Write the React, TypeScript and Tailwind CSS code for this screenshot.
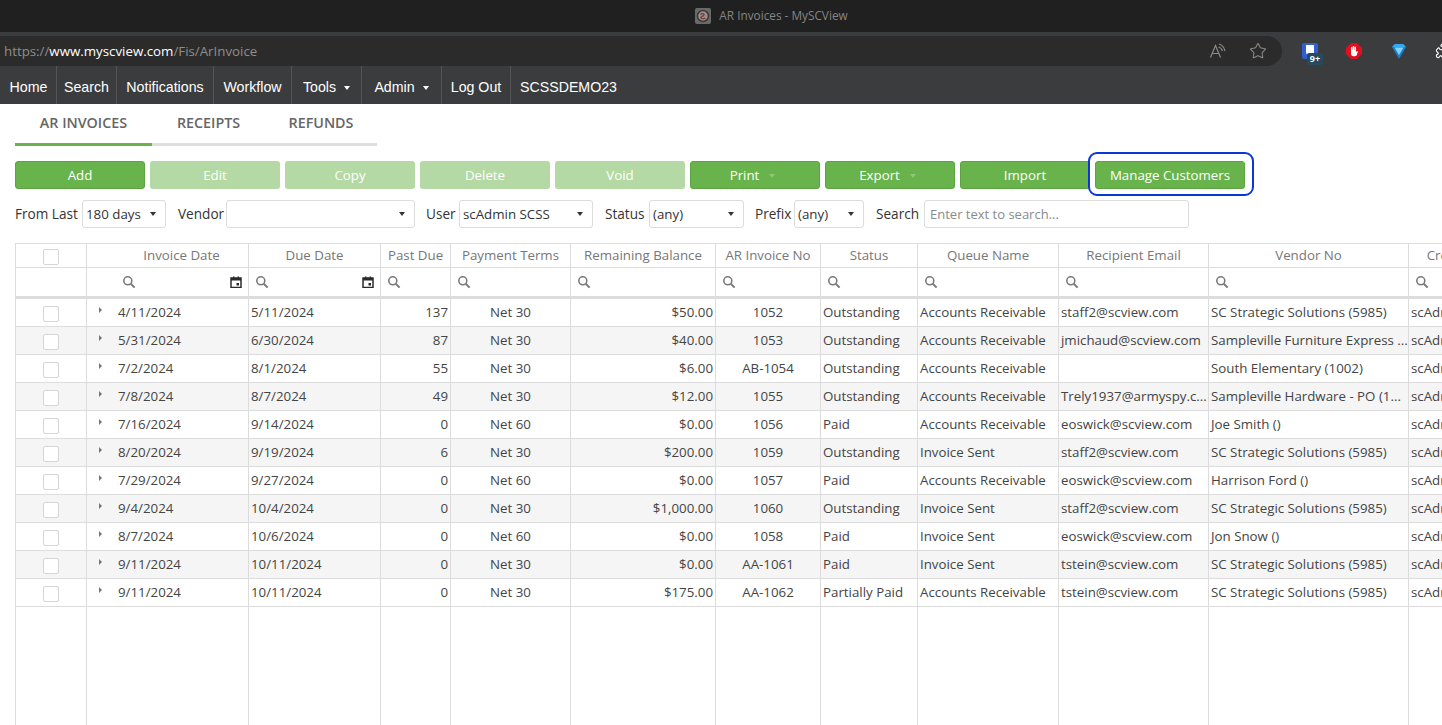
import React from "react";
import { Star, Puzzle } from "lucide-react";

const F = "font-['Open_Sans','Noto_Sans',sans-serif]";

const Caret = ({ c = "border-t-[#333]" }: { c?: string }) => (
  <span className={`inline-block w-0 h-0 border-x-[3.5px] border-x-transparent border-t-[4px] ${c}`} />
);

const Search = () => (
  <svg width="14" height="14" viewBox="0 0 14 14" fill="none" stroke="#7a7a7a" strokeWidth="1.6">
    <circle cx="5.8" cy="5.8" r="4" />
    <path d="M8.8 8.8 12.6 12.6" strokeWidth="2" />
  </svg>
);

const Cal = () => (
  <svg width="12" height="12" viewBox="0 0 12 12">
    <path d="M1 2h10v9.500H1z" fill="none" stroke="#2b2b2b" strokeWidth="1.500" />
    <path d="M1 2h10v2.500H1zM3 .5h1.500V2H3zM7.500 .5H9V2H7.500zM6.500 7H9v2.500H6.500z" fill="#2b2b2b" />
  </svg>
);

const cols = [
  { w: "w-[71px]", h: "" },
  { w: "w-[162px]", h: "Invoice Date", pad: "pl-[28px]", cal: true },
  { w: "w-[132px]", h: "Due Date", cal: true },
  { w: "w-[70px]", h: "Past Due" },
  { w: "w-[120px]", h: "Payment Terms" },
  { w: "w-[145px]", h: "Remaining Balance" },
  { w: "w-[105px]", h: "AR Invoice No" },
  { w: "w-[97px]", h: "Status" },
  { w: "w-[141px]", h: "Queue Name" },
  { w: "w-[150px]", h: "Recipient Email" },
  { w: "w-[200px]", h: "Vendor No" },
  { w: "w-[104px]", h: "Created By" },
];

const rows = [
  ["4/11/2024", "5/11/2024", "137", "Net 30", "$50.00", "1052", "Outstanding", "Accounts Receivable", "staff2@scview.com", "SC Strategic Solutions (5985)"],
  ["5/31/2024", "6/30/2024", "87", "Net 30", "$40.00", "1053", "Outstanding", "Accounts Receivable", "jmichaud@scview.com", "Sampleville Furniture Express ..."],
  ["7/2/2024", "8/1/2024", "55", "Net 30", "$6.00", "AB-1054", "Outstanding", "Accounts Receivable", "", "South Elementary (1002)"],
  ["7/8/2024", "8/7/2024", "49", "Net 30", "$12.00", "1055", "Outstanding", "Accounts Receivable", "Trely1937@armyspy.c...", "Sampleville Hardware - PO (1..."],
  ["7/16/2024", "9/14/2024", "0", "Net 60", "$0.00", "1056", "Paid", "Accounts Receivable", "eoswick@scview.com", "Joe Smith ()"],
  ["8/20/2024", "9/19/2024", "6", "Net 30", "$200.00", "1059", "Outstanding", "Invoice Sent", "staff2@scview.com", "SC Strategic Solutions (5985)"],
  ["7/29/2024", "9/27/2024", "0", "Net 60", "$0.00", "1057", "Paid", "Accounts Receivable", "eoswick@scview.com", "Harrison Ford ()"],
  ["9/4/2024", "10/4/2024", "0", "Net 30", "$1,000.00", "1060", "Outstanding", "Invoice Sent", "staff2@scview.com", "SC Strategic Solutions (5985)"],
  ["8/7/2024", "10/6/2024", "0", "Net 60", "$0.00", "1058", "Paid", "Invoice Sent", "eoswick@scview.com", "Jon Snow ()"],
  ["9/11/2024", "10/11/2024", "0", "Net 30", "$0.00", "AA-1061", "Paid", "Invoice Sent", "tstein@scview.com", "SC Strategic Solutions (5985)"],
  ["9/11/2024", "10/11/2024", "0", "Net 30", "$175.00", "AA-1062", "Partially Paid", "Accounts Receivable", "tstein@scview.com", "SC Strategic Solutions (5985)"],
];

const Btn = ({ t, off, caret }: { t: string; off?: boolean; caret?: boolean }) => (
  <div className={`w-[130px] h-[28px] rounded-[3px] flex items-center justify-center gap-[10px] pt-[1px] text-white text-[13.3px] ${caret ? "pr-[5px]" : ""} ${off ? "bg-[#b4d9a5]" : "bg-[#69b34c] border border-[#5ca341]"}`}>
    {t}
    {caret && <Caret c="border-t-[#8fc67a]" />}
  </div>
);

const Sel = ({ t, w }: { t: string; w: string }) => (
  <div className={`${w} h-[28px] border border-[#dcdcdc] rounded-[3px] flex items-center justify-between pl-[3px] pr-[9px] text-[13.3px] text-[#333]`}>
    <span className="pt-[1px]">{t}</span>
    <Caret />
  </div>
);

function Box({ mt }: { mt: string }) {
  return <span className={`block w-[16px] h-[16px] border border-[#d5d5d5] rounded-[2px] bg-white ${mt}`} />;
}

function Nav({ t, w, caret, last }: { t: string; w: string; caret?: boolean; last?: boolean }) {
  return (
    <div className={`${w} flex items-center justify-center gap-[8px] pt-[6px] ${last ? "" : "border-r border-[#555]"}`}>
      {t}
      {caret && <Caret c="border-t-white" />}
    </div>
  );
}

export default function App() {
  return (
    <div className={`${F} w-[1442px] h-[725px] overflow-hidden bg-white flex flex-col`}>
      <div className="h-[32px] bg-[#202020] flex items-center justify-center gap-2 pl-[101px] text-[11.8px] text-[#858585] shrink-0">
        <svg width="16" height="16" viewBox="0 0 16 16">
          <rect width="16" height="16" rx="2" fill="#6a6a6a" />
          <circle cx="8" cy="8" r="5.500" fill="#9a8f8c" stroke="#3a3a3a" strokeWidth="1.500" />
          <path d="M5.500 6.500c1-1.500 4-1 3.500.5s-3 1-3 2.500 3 1.500 4.500.5" fill="none" stroke="#7d3a32" strokeWidth="1.300" />
        </svg>
        AR Invoices - MySCView
      </div>
      <div className="h-[3px] bg-[#3b3c3e] shrink-0" />
      <div className="h-[31px] bg-[#3b3c3e] flex items-center shrink-0 relative">
        <div className="w-[1282px] shrink-0 h-[30px] bg-[#2b2b2b] rounded-r-[15px] flex items-center pl-[4px] text-[13.3px] text-[#8e8e8e]">
          <span className="pt-[2px]">
            https://<span className="text-white">www.myscview.com</span>/Fis/ArInvoice
          </span>
          <div className="ml-auto flex items-center gap-[22px] pr-[15px]">
            <svg width="18" height="18" viewBox="0 0 18 18" fill="none" stroke="#8a8a8a" strokeWidth="1.200">
              <path d="M1.500 15.500 6.500 3.500l5 12M3.500 11.500h6M10 2c3 .8 5 3 6 7M9.500 5c2 .6 3.500 2 4 4" />
            </svg>
            <Star size={18} color="#8a8a8a" strokeWidth={1.400} />
          </div>
        </div>
        <div className="flex items-center pl-[20px] shrink-0">
          <span className="relative w-[16px] h-[16px] rounded-[2px] bg-[#2f5fd0] shrink-0 flex justify-center">
            <span className="w-[8px] h-[10px] mt-[2px] bg-white rounded-b-[3px]" />
            <span className="absolute left-[5px] top-[10px] w-[16px] h-[12px] rounded-[2px] bg-[#264a5e] text-white text-[9px] font-bold leading-[12px] text-center">9+</span>
          </span>
          <svg width="16" height="16" viewBox="0 0 16 16" className="shrink-0 ml-[28px]">
            <path d="M5 0h6l5 5v6l-5 5H5l-5-5V5z" fill="#e0101f" />
            <path d="M5 8V4.500a.8.8 0 0 1 1.400 0V7h.3V3.500a.8.8 0 0 1 1.500 0V7h.3V4a.8.8 0 0 1 1.500 0v5.500l.6-1.200c.4-.7 1.500-.3 1.200.5L10.800 12c-.4.800-1 1.200-2 1.200H7.500C6 13.200 5 12 5 10.500z" fill="#ffffff" />
          </svg>
          <svg width="14" height="16" viewBox="0 0 14 16" className="shrink-0 ml-[30px]">
            <path d="M0 4 3 1h8l3 3-7 12z" fill="#1f7fc9" />
            <path d="M2.500 4.500h9L7 12z" fill="#7fd4ff" />
            <path d="M3 1h8l3 3H0z" fill="#35a8ee" />
          </svg>
          <Puzzle size={17} color="#ffffff" strokeWidth={1.600} className="shrink-0 ml-[29px]" />
        </div>
      </div>
      <div className="h-[38px] bg-[#3b3c3e] flex items-stretch pl-[1px] text-white text-[14.2px] shrink-0 font-['Liberation_Sans',sans-serif]">
        <Nav t="Home" w="w-[56px]" />
        <Nav t="Search" w="w-[60px]" />
        <Nav t="Notifications" w="w-[97px]" />
        <Nav t="Workflow" w="w-[78px]" />
        <Nav t="Tools" w="w-[70px]" caret />
        <Nav t="Admin" w="w-[80px]" caret />
        <Nav t="Log Out" w="w-[69px]" />
        <Nav t="SCSSDEMO23" w="w-[115px]" last />
      </div>
      <div className="h-[40px] flex pl-[15px] shrink-0">
        <div className="flex w-[362px] h-[42px] border-b-[3px] border-[#dfdfdf] text-[14.3px] font-semibold text-[#666]">
          <div className="w-[137px] h-[42px] border-b-[3px] border-[#69b34c] flex items-center justify-center pb-[2px]">AR INVOICES</div>
          <div className="w-[113px] flex items-center justify-center pb-[2px]">RECEIPTS</div>
          <div className="w-[112px] flex items-center justify-center pb-[2px]">REFUNDS</div>
        </div>
      </div>
      <div className="mt-[17px] pl-[15px] flex gap-[5px] shrink-0 relative">
        <Btn t="Add" />
        <Btn t="Edit" off />
        <Btn t="Copy" off />
        <Btn t="Delete" off />
        <Btn t="Void" off />
        <Btn t="Print" caret />
        <Btn t="Export" caret />
        <Btn t="Import" />
        <div className="w-[150px] h-[28px] rounded-[3px] flex items-center justify-center pt-[1px] text-white text-[13.3px] bg-[#69b34c] border border-[#5ca341]">Manage Customers</div>
        <div className="absolute left-[1088px] top-[-9px] w-[166px] h-[44px] rounded-[9px] border-2 border-[#0a37d6]" />
      </div>
      <div className="mt-[11px] pl-[15px] flex items-center text-[13.6px] text-[#333] shrink-0">
        <span className="w-[67px] pt-[1px] whitespace-nowrap">From Last</span>
        <Sel t="180 days" w="w-[84px]" />
        <span className="ml-[12px] w-[48px] pt-[1px]">Vendor</span>
        <Sel t="" w="w-[189px]" />
        <span className="ml-[11px] w-[33px] pt-[1px]">User</span>
        <Sel t="scAdmin SCSS" w="w-[134px]" />
        <span className="ml-[12px] w-[44px] pt-[1px]">Status</span>
        <Sel t="(any)" w="w-[95px]" />
        <span className="ml-[11px] w-[39px] pt-[1px]">Prefix</span>
        <Sel t="(any)" w="w-[70px]" />
        <span className="ml-[12px] w-[48px] pt-[1px]">Search</span>
        <div className="w-[265px] h-[28px] border border-[#dcdcdc] rounded-[3px] flex items-center pl-[5px] pt-[1px] text-[13px] text-[#8a8a8a]">Enter text to search...</div>
      </div>
      <div className="mt-[15px] ml-[15px] flex-1 border-l border-t border-[#dcdcdc] text-[13.3px] text-[#444] min-h-0 overflow-hidden">
        <div className="flex h-[24px] border-b border-[#dcdcdc] text-[#777]">
          {cols.map((c, i) => (
            <div key={i} className={`${c.w} shrink-0 border-r border-[#dcdcdc] flex items-center justify-center whitespace-nowrap overflow-hidden ${c.pad ?? ""}`}>
              {i === 0 ? <Box mt="mt-[2px]" /> : c.h}
            </div>
          ))}
        </div>
        <div className="flex h-[31px] border-b-[3px] border-[#dcdcdc]">
          {cols.map((c, i) => (
            <div key={i} className={`${c.w} shrink-0 border-r border-[#dcdcdc] flex items-center pr-[6px] ${i === 1 ? "pl-[35px]" : "pl-[6px]"}`}>
              {i > 0 && <Search />}
              {c.cal && <span className="ml-auto"><Cal /></span>}
            </div>
          ))}
        </div>
        {rows.map((r, i) => (
          <div key={i} className={`flex h-[28px] border-b border-[#dcdcdc] ${i % 2 ? "bg-[#f5f5f5]" : ""}`}>
            <div className={`${cols[0].w} shrink-0 border-r border-[#dcdcdc] flex items-center justify-center`}><Box mt="mt-[2px]" /></div>
            <div className={`${cols[1].w} shrink-0 border-r border-[#dcdcdc] flex items-center pl-[12px] gap-[16px]`}>
              <span className="w-0 h-0 mb-[6px] border-y-[3px] border-y-transparent border-l-[3px] border-l-[#777]" />
              {r[0]}
            </div>
            {r.slice(1).map((v, j) => (
              <div key={j} className={`${cols[j + 2].w} shrink-0 border-r border-[#dcdcdc] flex items-center px-[2px] whitespace-nowrap overflow-hidden ${j === 1 || j === 3 ? "justify-end" : j === 2 || j === 4 ? "justify-center" : ""}`}>{v}</div>
            ))}
            <div className={`${cols[11].w} shrink-0 border-r border-[#dcdcdc] flex items-center px-[2px] whitespace-nowrap overflow-hidden`}>scAdmin SCSS</div>
          </div>
        ))}
        <div className="flex h-[200px]">
          {cols.map((c, i) => (
            <div key={i} className={`${c.w} shrink-0 border-r border-[#dcdcdc]`} />
          ))}
        </div>
      </div>
    </div>
  );
}
